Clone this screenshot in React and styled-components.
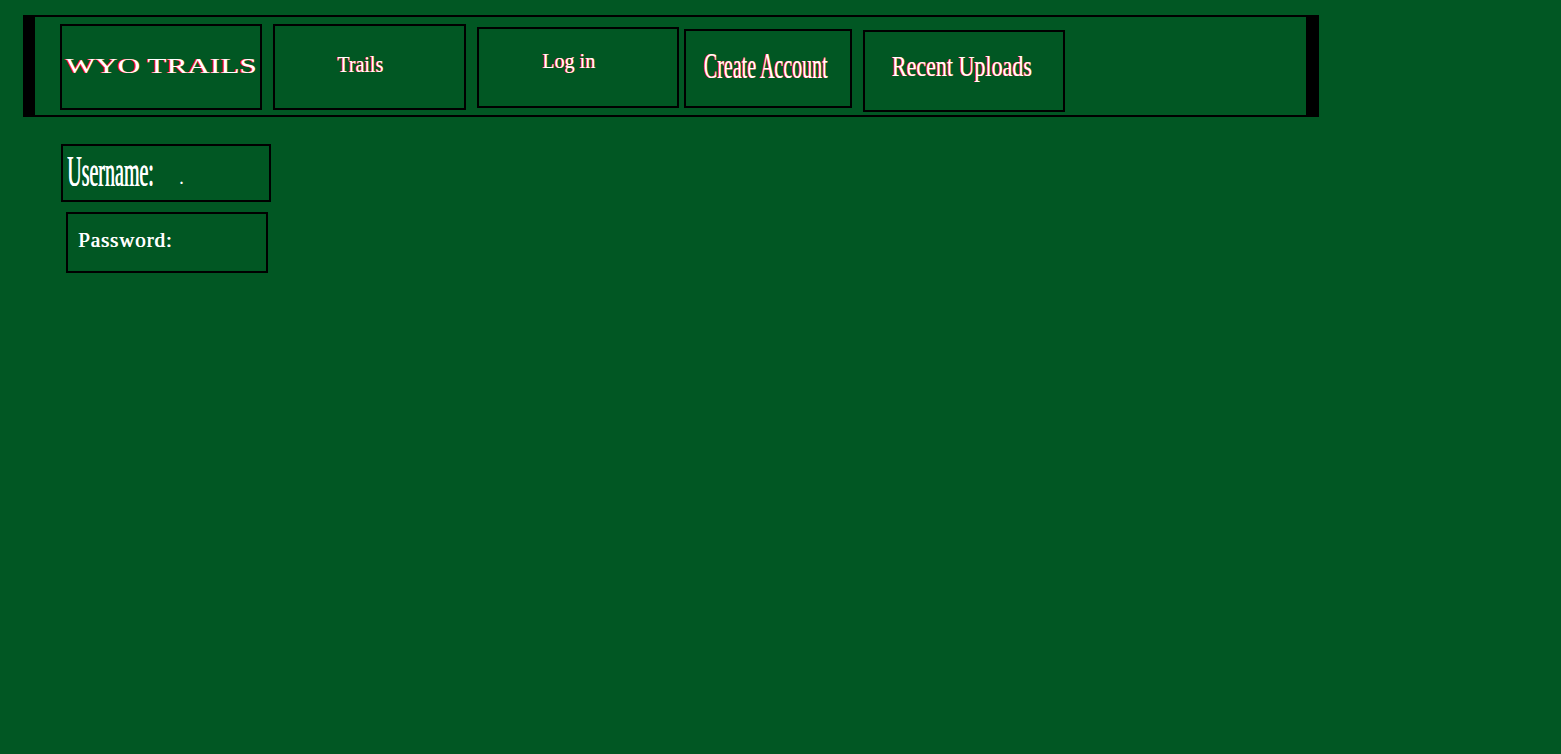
import styled, { createGlobalStyle } from 'styled-components'

const Global = createGlobalStyle`
    html, body {
        margin:0;
        padding:0;
        background:#015723;
        min-height:100%;
    }
    body {
        font-family:"Liberation Serif", "Times New Roman", serif;
        color:#fff;
    }
`

const links = [
    { label: 'Trails', w: 193, h: 86, mt: 7, ml: 11, pt: 26, size: 20, sy: 1.15, shift: -9 },
    { label: 'Log in', w: 202, h: 81, mt: 10, ml: 11, pt: 20, size: 20, sy: 1.1, shift: -9 },
    { label: 'Create Account', w: 168, h: 79, mt: 12, ml: 5, pt: 16, size: 20, sy: 1.8, shift: -2 },
    { label: 'Recent Uploads', w: 202, h: 82, mt: 13, ml: 11, pt: 21, size: 22, sy: 1.3, shift: -2 },
]

const App = () => {
    return (
        <Page>
            <Global />
            <Header>
                <NavBox w={202} h={86} mt={7} ml={25} pt={29}>
                    <Brand>WYO TRAILS</Brand>
                </NavBox>
                {links.map((l) => (
                    <NavBox key={l.label} w={l.w} h={l.h} mt={l.mt} ml={l.ml} pt={l.pt}>
                        <NavLink size={l.size} sy={l.sy} shift={l.shift}>{l.label}</NavLink>
                    </NavBox>
                ))}
            </Header>
            <Form>
                <Field w={210} h={58} ml={38} pt={3} pl={4}>
                    <Username>Username:</Username>
                    <Dot>.</Dot>
                </Field>
                <Field w={202} h={61} ml={43} mt={10} pt={16} pl={10}>
                    <Password>Password:</Password>
                </Field>
            </Form>
        </Page>
    )
}

const Page = styled.div`
    min-height:754px;
    padding:15px 0 0 23px;
    box-sizing:border-box;
`
const Header = styled.nav`
    width:1296px;
    height:102px;
    box-sizing:border-box;
    border-style:solid;
    border-color:#000;
    border-width:2px 13px 2px 12px;
    display:flex;
    align-items:flex-start;
`
const NavBox = styled.a`
    width:${(p) => p.w}px;
    height:${(p) => p.h}px;
    margin-top:${(p) => p.mt}px;
    margin-left:${(p) => p.ml}px;
    padding-top:${(p) => p.pt}px;
    box-sizing:border-box;
    border:2px solid #000;
    display:flex;
    justify-content:center;
    align-items:flex-start;
    flex-shrink:0;
    cursor:pointer;
`
const Brand = styled.span`
    display:inline-block;
    font-size:22px;
    line-height:1;
    color:#fff;
    text-shadow:-1px 0 #ff1f1f, -1px 0 #ff1f1f;
    transform:scaleX(1.42);
    transform-origin:center top;
    white-space:nowrap;
`
const NavLink = styled.span`
    display:inline-block;
    font-size:${(p) => p.size}px;
    line-height:1;
    color:#fff;
    text-shadow:-1px 0 #ff2a2a, -1px 0 #ff2a2a;
    transform:translateX(${(p) => p.shift}px) scaleY(${(p) => p.sy});
    transform-origin:center top;
    white-space:nowrap;
`
const Form = styled.div`
    display:flex;
    flex-direction:column;
    align-items:flex-start;
    margin-top:27px;
`
const Field = styled.div`
    width:${(p) => p.w}px;
    height:${(p) => p.h}px;
    margin-left:${(p) => p.ml}px;
    margin-top:${(p) => p.mt || 0}px;
    padding:${(p) => p.pt}px 0 0 ${(p) => p.pl}px;
    box-sizing:border-box;
    border:2px solid #000;
    display:flex;
    align-items:flex-start;
`
const Username = styled.span`
    display:inline-block;
    font-size:20px;
    line-height:1;
    color:#fff;
    text-shadow:0.5px 0 #fff;
    transform:scaleY(2.2);
    transform-origin:left top;
    white-space:nowrap;
`
const Dot = styled.span`
    font-size:14px;
    font-weight:bold;
    line-height:1;
    margin:24px 0 0 26px;
    color:#fff;
`
const Password = styled.span`
    font-size:21px;
    line-height:1;
    letter-spacing:0.9px;
    color:#fff;
    text-shadow:0.6px 0 #fff;
    white-space:nowrap;
`

export default App
